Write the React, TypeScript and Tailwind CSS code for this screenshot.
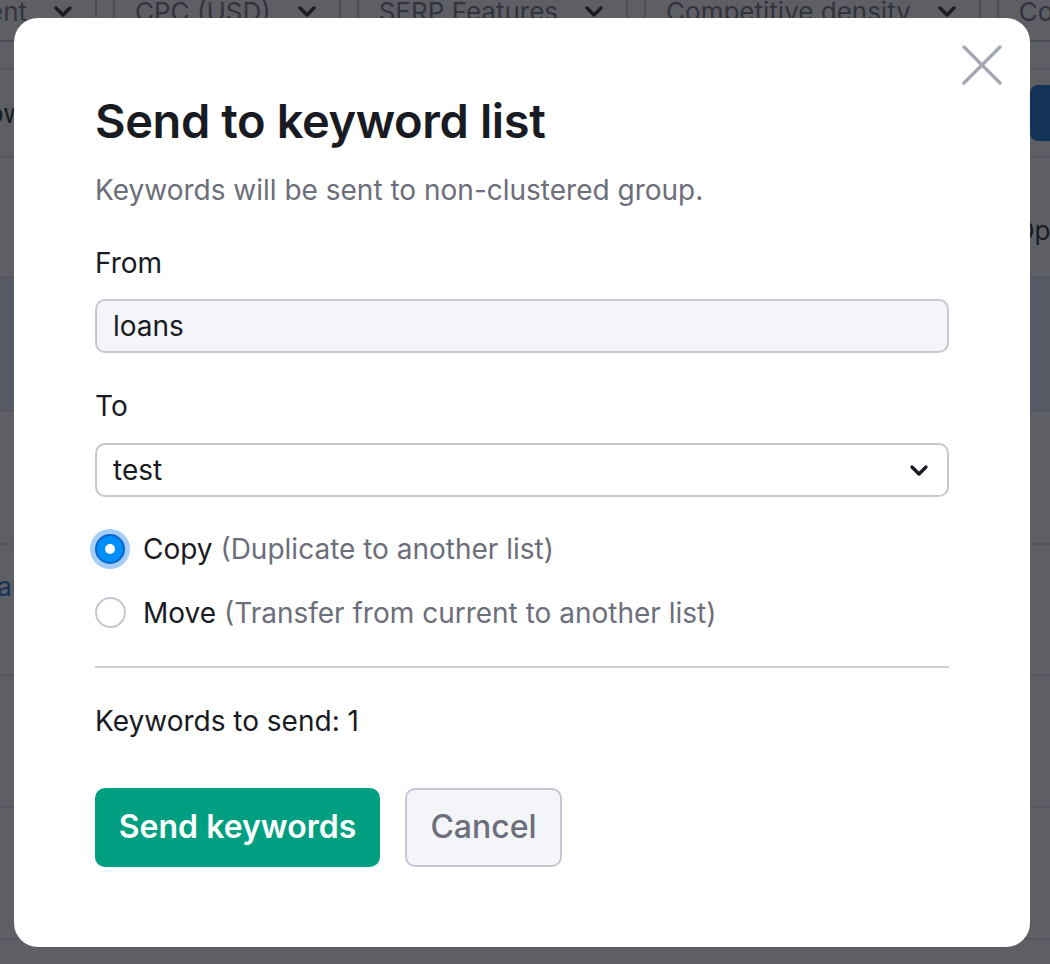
import React from "react";

const filters = ["Intent", "CPC (USD)", "SERP Features", "Competitive density", "Com"];

function Chevron({ className }: { className?: string }) {
  return (
    <svg viewBox="0 0 24 24" className={className} fill="none">
      <path
        d="M5 9l7 7 7-7"
        stroke="currentColor"
        strokeWidth="3.4"
        strokeLinecap="round"
        strokeLinejoin="round"
      />
    </svg>
  );
}

function Background() {
  return (
    <div className="min-h-[964px] bg-white overflow-hidden font-['Inter',sans-serif]">
      {/* filter bar, scrolled partly out of view */}
      <div className="h-[70px] flex flex-col border-b-2 border-[#e0e1e9]">
        <div className="flex gap-[16px] -mt-[20px] whitespace-nowrap">
          {filters.map((f, i) => (
            <div
              key={f}
              className={`${i === 0 ? "w-[300px] -ml-[203px] justify-end" : ""} shrink-0 h-[62px] border-2 border-[#c4c7cf] rounded-[8px] flex items-center gap-[24px] px-[20px] text-[26px] text-[#6c6e79]`}
            >
              <span>{f}</span>
              <Chevron className="w-[24px] h-[24px] text-[#191b23]" />
            </div>
          ))}
        </div>
      </div>

      <div className="h-[88px] border-b-2 border-[#e0e1e9] flex items-center justify-between">
        <span className="text-[26px] text-[#191b23] -ml-[44px]">Show</span>
        <div className="w-[120px] h-[56px] rounded-[8px] bg-[#006dca] -mr-[100px]" />
      </div>
      <div className="h-[120px] border-b-2 border-[#e0e1e9] flex items-end justify-end pb-[26px]">
        <span className="text-[26px] text-[#191b23] -mr-[60px]">Options</span>
      </div>
      <div className="h-[134px] border-b-2 border-[#e0e1e9] bg-[#e3efff]" />
      <div className="h-[133px] border-b-2 border-[#e0e1e9]" />
      <div className="h-[131px] border-b-2 border-[#e0e1e9] pt-[22px]">
        <span className="text-[26px] text-[#006dca] -ml-[25px] inline-block">loans</span>
      </div>
      <div className="h-[132px] border-b-2 border-[#e0e1e9]" />
      <div className="h-[132px] border-b-2 border-[#e0e1e9]" />
    </div>
  );
}

function Radio({ checked }: { checked?: boolean }) {
  if (checked) {
    return (
      <span className="w-[40px] h-[40px] rounded-full bg-[#a6cdf7] flex items-center justify-center shrink-0">
        <span className="w-[30px] h-[30px] rounded-full bg-[#008ff8] border-2 border-[#0a64c9] flex items-center justify-center">
          <span className="w-[10px] h-[10px] rounded-full bg-white" />
        </span>
      </span>
    );
  }
  return (
    <span className="w-[40px] h-[40px] flex items-center justify-center shrink-0">
      <span className="w-[31px] h-[31px] rounded-full bg-white border-2 border-[#c4c7cf]" />
    </span>
  );
}

export default function App() {
  return (
    <div className="relative">
      <Background />

      <div className="fixed inset-0 bg-[#191b23]/70 flex items-center justify-center font-['Inter',sans-serif]">
        <div className="relative w-[1016px] bg-white rounded-[24px] px-[81px] pt-[75px] pb-[80px] -ml-[6px]">
          <button className="absolute top-[27px] right-[28px] w-[40px] h-[40px] flex items-center justify-center text-[#a4a7b1]">
            <svg viewBox="0 0 40 40" className="w-[40px] h-[40px]" fill="none">
              <path
                d="M2 2l36 36M38 2L2 38"
                stroke="currentColor"
                strokeWidth="3.3"
                strokeLinecap="round"
              />
            </svg>
          </button>

          <h2 className="text-[47px] leading-[56px] font-semibold text-[#191b23] tracking-[-0.4px]">
            Send to keyword list
          </h2>
          <p className="mt-[25px] text-[28px] leading-[32px] text-[#6c6e79]">
            Keywords will be sent to non-clustered group.
          </p>

          <div className="mt-[41px] text-[28px] leading-[32px] text-[#191b23]">From</div>
          <div className="mt-[20px] h-[54px] rounded-[10px] border-2 border-[#c4c7cf] bg-[#f4f5f9] flex items-center px-[16px] text-[28px] text-[#191b23]">
            loans
          </div>

          <div className="mt-[37px] text-[28px] leading-[32px] text-[#191b23]">To</div>
          <div className="mt-[21px] h-[54px] rounded-[10px] border-2 border-[#c4c7cf] bg-white flex items-center justify-between pl-[16px] pr-[16px] text-[28px] text-[#191b23]">
            <span>test</span>
            <Chevron className="w-[24px] h-[24px] text-[#191b23]" />
          </div>

          <div className="mt-[32px] h-[40px] flex items-center gap-[13px] -ml-[5px] text-[28px]">
            <Radio checked />
            <span className="text-[#191b23]">
              Copy <span className="text-[#6c6e79]">(Duplicate to another list)</span>
            </span>
          </div>
          <div className="mt-[24px] h-[40px] flex items-center gap-[13px] -ml-[5px] text-[28px]">
            <Radio />
            <span className="text-[#191b23]">
              Move <span className="text-[#6c6e79]">(Transfer from current to another list)</span>
            </span>
          </div>

          <div className="mt-[33px] h-[2px] bg-[#cdd0d6]" />

          <div className="mt-[37px] text-[28px] leading-[32px] text-[#191b23]">
            Keywords to send: 1
          </div>

          <div className="mt-[51px] flex gap-[25px]">
            <button className="h-[79px] w-[285px] rounded-[10px] bg-[#009f81] text-white text-[32px] font-semibold">
              Send keywords
            </button>
            <button className="h-[79px] w-[157px] rounded-[10px] bg-[#f4f5f9] border-2 border-[#c4c7cf] text-[#6c6e79] text-[32px] font-medium">
              Cancel
            </button>
          </div>
        </div>
      </div>
    </div>
  );
}
